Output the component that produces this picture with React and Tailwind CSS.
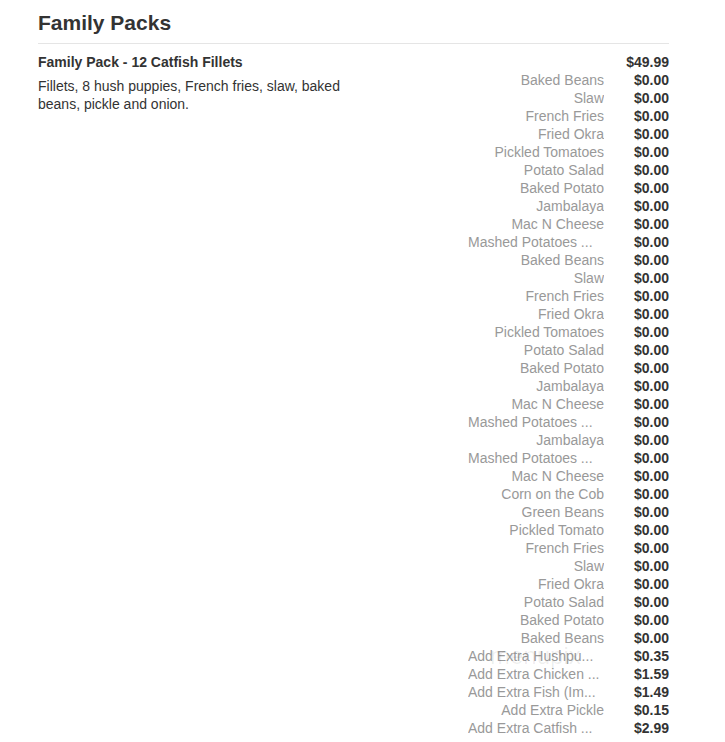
import React from "react";

const options = [
    ["Baked Beans", "$0.00"],
    ["Slaw", "$0.00"],
    ["French Fries", "$0.00"],
    ["Fried Okra", "$0.00"],
    ["Pickled Tomatoes", "$0.00"],
    ["Potato Salad", "$0.00"],
    ["Baked Potato", "$0.00"],
    ["Jambalaya", "$0.00"],
    ["Mac N Cheese", "$0.00"],
    ["Mashed Potatoes ...", "$0.00"],
    ["Baked Beans", "$0.00"],
    ["Slaw", "$0.00"],
    ["French Fries", "$0.00"],
    ["Fried Okra", "$0.00"],
    ["Pickled Tomatoes", "$0.00"],
    ["Potato Salad", "$0.00"],
    ["Baked Potato", "$0.00"],
    ["Jambalaya", "$0.00"],
    ["Mac N Cheese", "$0.00"],
    ["Mashed Potatoes ...", "$0.00"],
    ["Jambalaya", "$0.00"],
    ["Mashed Potatoes ...", "$0.00"],
    ["Mac N Cheese", "$0.00"],
    ["Corn on the Cob", "$0.00"],
    ["Green Beans", "$0.00"],
    ["Pickled Tomato", "$0.00"],
    ["French Fries", "$0.00"],
    ["Slaw", "$0.00"],
    ["Fried Okra", "$0.00"],
    ["Potato Salad", "$0.00"],
    ["Baked Potato", "$0.00"],
    ["Baked Beans", "$0.00"],
    ["Add Extra Hushpu...", "$0.35"],
    ["Add Extra Chicken ...", "$1.59"],
    ["Add Extra Fish (Im...", "$1.49"],
    ["Add Extra Pickle", "$0.15"],
    ["Add Extra Catfish ...", "$2.99"],
];

const App = () => {
    return (
        <div className="w-[725px] bg-white font-['Liberation_Sans',Arial,sans-serif] text-[#333]">
            <div className="w-[631px] ml-[38px] pt-[10px] relative">
                <h2 className="text-[21px] font-bold leading-[26px]">Family Packs</h2>
                <div className="mt-[7px] border-t border-[#e5e5e5]" />

                <div className="flex justify-between mt-[9px]">
                    {/* Item text */}
                    <div className="w-[315px]">
                        <h3 className="text-[14px] font-bold leading-[18px]">Family Pack - 12 Catfish Fillets</h3>
                        <p className="text-[14px] leading-[18px] mt-[6px]">
                            Fillets, 8 hush puppies, French fries, slaw, baked beans, pickle and onion.
                        </p>
                    </div>

                    {/* Prices */}
                    <div className="flex flex-col">
                        <div className="flex h-[18px] items-center">
                            <span className="w-[136px]" />
                            <span className="w-[65px] text-right text-[14px] font-bold">$49.99</span>
                        </div>
                        {options.map(([name, price], i) => (
                            <div key={i} className="flex h-[18px] items-center">
                                <span
                                    className={
                                        name.endsWith("...")
                                            ? "w-[136px] whitespace-nowrap overflow-hidden text-left text-[14px] text-[#999]"
                                            : "w-[136px] whitespace-nowrap overflow-hidden text-right text-[14px] text-[#999]"
                                    }
                                >
                                    {name}
                                </span>
                                <span className="w-[65px] text-right text-[14px] font-bold">{price}</span>
                            </div>
                        ))}
                    </div>
                </div>

                {/* watermark */}
                <span className="absolute left-[452px] top-[638px] text-[24px] text-[#000]/[0.07] pointer-events-none">menupix</span>
            </div>
        </div>
    );
};

export default App;
